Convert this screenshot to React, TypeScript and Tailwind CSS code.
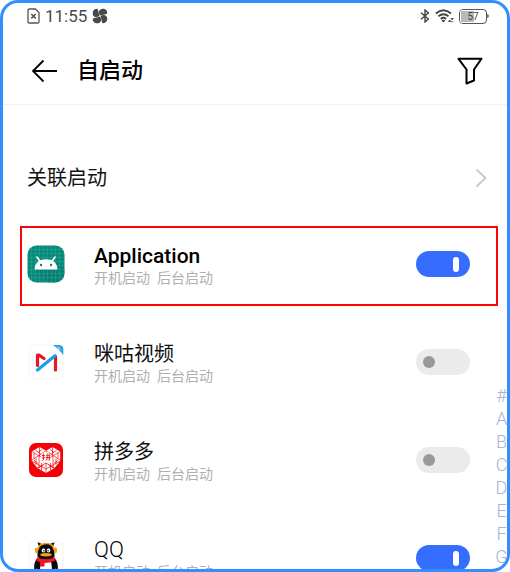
import { useState } from 'react';
import type { ReactNode } from 'react';

function SimIcon() {
  return (
    <svg width="13" height="16" viewBox="0 0 13 16" fill="none" stroke="#555" aria-hidden="true">
      <path d="M1 2.2Q1 1 2.2 1H8.5L12 4.5V13.8Q12 15 10.8 15H2.2Q1 15 1 13.8Z" strokeWidth="1.3" />
      <path d="M4.3 6l4.4 4.4M8.7 6l-4.4 4.4" strokeWidth="1.5" />
    </svg>
  );
}

function FanIcon() {
  const leaf = 'M8.2 7.6C5.8 5 6.800 .7 10.800 .7C14 .7 15.300 3 15.200 5.200C14.500 6.500 11 6.300 8.200 7.600Z';
  return (
    <svg width="16" height="16" viewBox="0 0 16 16" fill="#484848" aria-hidden="true">
      <path d={leaf} />
      <path d={leaf} transform="rotate(90 8 8)" />
      <path d={leaf} transform="rotate(180 8 8)" />
      <path d={leaf} transform="rotate(270 8 8)" />
    </svg>
  );
}

function BluetoothIcon() {
  return (
    <svg width="10" height="14" viewBox="0 0 10 14" fill="none" stroke="#444" strokeWidth="1.4" aria-hidden="true">
      <path d="M1 3.800L8.400 10L5 13V1L8.400 4L1 10.200" />
    </svg>
  );
}

function WifiIcon() {
  return (
    <svg width="19" height="14" viewBox="0 0 19 14" fill="none" stroke="#444" strokeWidth="1.900" aria-hidden="true">
      <path d="M.9 4.500Q8.400-2.100 16 4.500M3.400 7.300Q8.400 3.100 13.500 7.300M5.800 9.900Q8.400 7.800 11.100 9.900" />
      <path d="M6.400 11.500Q8.400 10.200 10.400 11.500L8.400 13.600Z" fill="#444" stroke="none" />
      <path d="M13.500 12.500l1.200-1.500 1.200 1.500ZM16 9.500h2.400l-1.200 1.300ZM16 12.700h2.400" fill="#444" strokeWidth=".8" />
    </svg>
  );
}

function Battery() {
  return (
    <div className="flex items-center">
      <div className="relative h-[15px] w-7 overflow-hidden rounded-[4px] border border-[#555] bg-white">
        <div className="h-full w-[15px] border border-white bg-[#b9b9b9]" />
        <span className="absolute inset-0 text-center text-[10px] leading-[13px] text-[#444]">57</span>
      </div>
      <div className="h-1 w-[2px] rounded-r-sm bg-[#777]" />
    </div>
  );
}

function AndroidIcon() {
  const lines = [5, 9, 13, 17, 21, 25, 29, 33];
  return (
    <svg width="38" height="38" viewBox="0 0 38 38" aria-hidden="true">
      <defs>
        <clipPath id="android-tile"><rect x=".5" y=".5" width="37" height="37" rx="9" /></clipPath>
      </defs>
      <g clipPath="url(#android-tile)">
        <rect width="38" height="38" fill="#0c8a7a" />
        <path d="M8 24L22 38H38V25L27 13Z" fill="#0a7a6b" opacity=".5" />
        {lines.map((n) => (
          <path key={n} d={`M${n - 0.5} 0V38M0 ${n - 0.5}H38`} stroke="#4bab9c" strokeWidth=".8" opacity=".45" />
        ))}
      </g>
      <path d="M10 12L13 16.500M28 12L25 16.500" stroke="#fff" strokeWidth="1.600" strokeLinecap="round" />
      <path d="M7.500 24.500C7.700 17.500 12.500 14.300 19 14.300S30.300 17.500 30.500 24.500Z" fill="#fff" />
      <circle cx="14" cy="20" r="1.200" fill="#0b8576" />
      <circle cx="24" cy="20" r="1.200" fill="#0b8576" />
    </svg>
  );
}

function MiguIcon() {
  return (
    <svg width="38" height="38" viewBox="0 0 38 38" aria-hidden="true">
      <rect x="2" y="2" width="34" height="34" rx="7" fill="#fff" stroke="#f3f3f3" />
      <path d="M26 2H32.500Q36.300 2.500 36.300 6V12L31.500 6.200Z" fill="#2b9fe0" />
      <path d="M30 3.200l4 4M33 3.500l-2 2.600" stroke="#b7def5" strokeWidth=".8" />
      <path d="M10.500 22.500V12.200H12L17 15.500M28.500 27V13.500" fill="none" stroke="#e71528" strokeWidth="3.200" strokeLinecap="round" strokeLinejoin="round" />
      <path d="M10.500 27L28 12.800" stroke="#16a0e6" strokeWidth="3.200" strokeLinecap="round" />
    </svg>
  );
}

function PinduoduoIcon() {
  return (
    <svg width="38" height="38" viewBox="0 0 38 38" aria-hidden="true">
      <rect x="2" y="2" width="34" height="34" rx="7" fill="#f40009" />
      <path d="M19 9.800L12.500 6L4.800 10.500V20L10.500 27L19 32L27.500 27L33.200 20V10.500L25.500 6Z" fill="#fff" />
      <g fill="none" stroke="#f40009" strokeWidth=".7">
        <path d="M12.500 6V15M4.800 10.500L14 16M19 9.800L5 19M12 15V27M4.800 20L19 28M25.500 6V15M33.200 10.500L24 16M19 9.800L33 19M26 15V27M33.200 20L19 28M19 22V32M10.500 27L19 22L27.500 27" />
        <path d="M7 12v5M8.500 9.500l5 3M15 8.500l-4 3M7 19.500l4 3M9 17.500v6M14.500 22v7M16.500 24l-5 3M31 12v5M29.500 9.500l-5 3M23 8.500l4 3M31 19.500l-4 3M29 17.500v6M23.500 22v7M21.500 24l5 3" />
      </g>
      <circle cx="19" cy="16" r="5.200" fill="#fff" />
      <path d="M14.800 14.500h3M16.400 12.500v6.500l-1 .6M14.800 17.300l3-1M19 14.200h4.500M18.700 16.700h5M20.200 14.200v3.300l-1 2M22.300 14.200v5.500M20 12.300l.6 1M22.600 12.300l-.6 1" fill="none" stroke="#f40009" strokeWidth=".9" />
    </svg>
  );
}

function QQIcon() {
  return (
    <svg width="38" height="38" viewBox="0 0 38 38" aria-hidden="true">
      <rect x="2" y="2" width="34" height="34" rx="7" fill="#fff" stroke="#f1f1f1" />
      <path d="M10.500 19C7.500 22 6.800 26 7.300 31L10 29.500Q11 35 15 36H23Q27 35 28 29.500L30.700 31C31.200 26 30.500 22 27.500 19Z" fill="#0b0b0b" />
      <path d="M14 23Q12.500 28 13.500 35H24.500Q25.500 28 24 23Z" fill="#fff" />
      <path d="M10.500 18V13Q10.500 4.500 19 4.500T27.500 13V18Q23 21 19 21T10.500 18Z" fill="#0b0b0b" />
      <path d="M12.500 9L10.500 3.500Q14.500 4 15.500 6ZM25.500 9L27.500 3.500Q23.500 4 22.500 6Z" fill="#0b0b0b" />
      <path d="M10.800 11Q12 4.800 19 4.600T27.200 11" fill="none" stroke="#f5a11c" strokeWidth="1.500" />
      <rect x="8" y="8.500" width="3" height="5.500" rx="1.500" fill="#f5a11c" />
      <rect x="27" y="8.500" width="3" height="5.500" rx="1.500" fill="#f5a11c" />
      <ellipse cx="16.500" cy="11.500" rx="1.800" ry="2" fill="#fff" />
      <ellipse cx="21.500" cy="11.500" rx="1.800" ry="2" fill="#fff" />
      <circle cx="16.900" cy="11.800" r=".8" fill="#0b0b0b" />
      <circle cx="21.100" cy="11.800" r=".8" fill="#0b0b0b" />
      <ellipse cx="19" cy="15.800" rx="5.800" ry="1.700" fill="#f5a11c" />
      <path d="M10 18.300Q19 22 28 18.300L28.500 21.500Q23 24 17.500 24V27.500H13V23.200L9.500 21.800Z" fill="#f01522" />
    </svg>
  );
}

type AppEntry = {
  name: string;
  icon: ReactNode;
  enabled: boolean;
  nameClass: string;
  frameClass: string;
};

const CJK_NAME = 'block text-xl leading-6 text-[#111]';
const PLAIN_FRAME = 'border-transparent';

const APPS: AppEntry[] = [
  {
    name: 'Application',
    icon: <AndroidIcon />,
    enabled: true,
    nameClass: 'block text-[21px] leading-6 font-medium text-black',
    frameClass: 'border-[#fb0505]',
  },
  { name: '咪咕视频', icon: <MiguIcon />, enabled: false, nameClass: CJK_NAME, frameClass: PLAIN_FRAME },
  { name: '拼多多', icon: <PinduoduoIcon />, enabled: false, nameClass: CJK_NAME, frameClass: PLAIN_FRAME },
  {
    name: 'QQ',
    icon: <QQIcon />,
    enabled: true,
    nameClass: 'block text-[22px] leading-6 font-light text-black',
    frameClass: PLAIN_FRAME,
  },
];

const INDEX = ['#', 'A', 'B', 'C', 'D', 'E', 'F', 'G'];

function AppRow({ app, id }: { app: AppEntry; id: string }) {
  const [on, setOn] = useState(app.enabled);
  return (
    <li className="flex h-[98px] items-center pr-[9px] pl-[17px]">
      <div className={`flex h-20 flex-1 items-center border-2 pr-[26px] pb-1 pl-[5px] ${app.frameClass}`}>
        {app.icon}
        <label htmlFor={id} className="ml-[29px] flex-1 pt-1">
          <span className={app.nameClass}>{app.name}</span>
          <span className="flex gap-[7px] text-sm leading-5 text-[#b0b0b0]">
            <span>开机启动</span>
            <span>后台启动</span>
          </span>
        </label>
        <input
          id={id}
          type="checkbox"
          checked={on}
          onChange={(e) => setOn(e.target.checked)}
          className="flex h-[26px] w-[54px] appearance-none items-center rounded-full bg-[#ebebeb] pr-[11px] pl-[7px] before:block before:size-3 before:rounded-full before:bg-[#999] checked:justify-end checked:bg-[#356eff] checked:before:h-[15px] checked:before:w-[6px] checked:before:bg-white"
        />
      </div>
    </li>
  );
}

export default function App() {
  return (
    <div className="h-screen bg-white font-[Roboto,'Noto_Sans_CJK_SC',sans-serif]">
      <div className="relative h-full overflow-hidden rounded-[18px] border-3 border-[#338fff] bg-white">
        <div className="flex h-[26px] items-center justify-between pr-[18px] pl-6 text-[#4a4a4a]">
          <div className="flex items-center gap-[5px]">
            <SimIcon />
            <span className="text-[17px] leading-6">11:55</span>
            <FanIcon />
          </div>
          <div className="flex items-center gap-[5px]">
            <BluetoothIcon />
            <WifiIcon />
            <Battery />
          </div>
        </div>

        <header className="flex h-[76px] items-center border-b border-[#f2f2f2] pt-2 pr-6 pl-7">
          <button type="button" aria-label="返回">
            <svg width="28" height="24" viewBox="0 0 28 24" fill="none" stroke="#000" strokeWidth="1.800" aria-hidden="true">
              <path d="M26 12H2M12.500 1.500L2 12L12.500 22.500" />
            </svg>
          </button>
          <h1 className="ml-[18px] flex-1 text-[22px] leading-8 font-medium text-black">自启动</h1>
          <button type="button" aria-label="筛选">
            <svg width="26" height="28" viewBox="0 0 26 28" fill="none" stroke="#000" strokeWidth="2" strokeLinejoin="round" aria-hidden="true">
              <path d="M1.500 1.800H24.500L17 12.500V23.500L9.500 26.500V12.500Z" />
            </svg>
          </button>
        </header>

        <a href="#linked" className="mt-11 flex h-[58px] items-center justify-between pr-5 pl-6 text-xl leading-6 text-[#111]">
          关联启动
          <svg width="12" height="20" viewBox="0 0 12 20" fill="none" stroke="#c8c8c8" strokeWidth="1.800" aria-hidden="true">
            <path d="M1.500 1.500L10.500 10L1.500 18.500" />
          </svg>
        </a>

        <ul className="mt-[10px]">
          {APPS.map((app, i) => (
            <AppRow key={app.name} app={app} id={`autostart-${i}`} />
          ))}
        </ul>

        <nav aria-label="索引" className="absolute right-0 bottom-px flex w-[11px] flex-col items-center text-lg leading-[23px] font-light text-[#a9b3d0]">
          {INDEX.map((letter) => (
            <a key={letter} href={`#index-${letter}`}>
              {letter}
            </a>
          ))}
        </nav>
      </div>
    </div>
  );
}
